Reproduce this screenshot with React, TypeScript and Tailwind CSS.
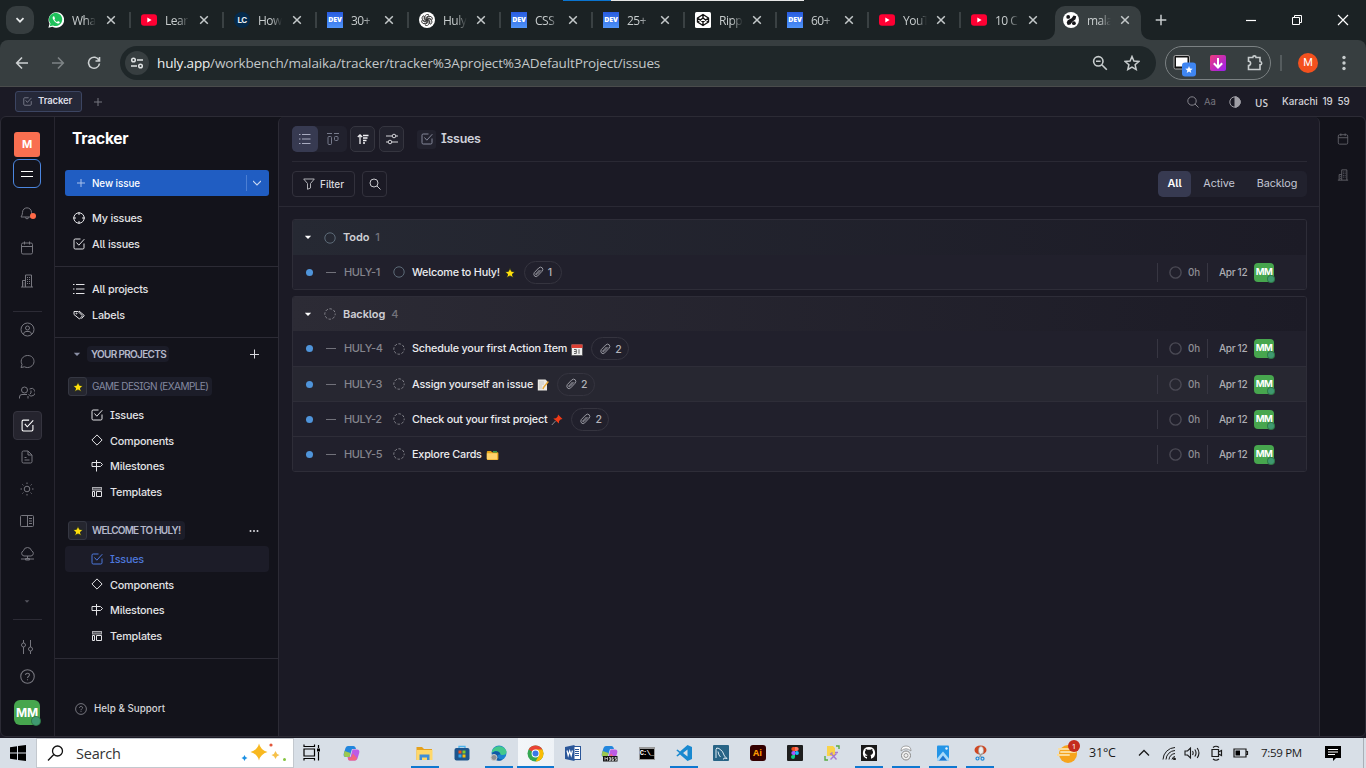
import React from "react";

type P = { children?: React.ReactNode; w?: number; h?: number; vb?: string; c?: string; sw?: number };

function Svg({ children, w = 16, h, vb, c = "", sw = 1 }: P) {
  const hh = h ?? w;
  return (
    <svg width={w} height={hh} viewBox={vb ?? `0 0 ${w} ${hh}`} fill="none" stroke="currentColor" strokeWidth={sw} className={`block shrink-0 ${c}`}>
      {children}
    </svg>
  );
}

/* ---------- favicons ---------- */
const WhatsApp = () => (
  <Svg w={16}>
    <path d="M0.4 15.8 1.5 11.7A7.8 7.8 0 1 1 4.4 14.7Z" fill="#fff" stroke="none" />
    <path d="M1.8 14.3 2.5 11.6A6.6 6.6 0 1 1 5 13.5Z" fill="#1fc15b" stroke="none" />
    <path d="M5.4 4.3c-.9.6-1 1.9-.2 3.3 1 1.900 2.500 3.200 4.300 3.800 1.200.3 2.200-.4 2.300-1.500L10 9l-.9 1C7.900 9.500 6.900 8.600 6.400 7.400L7 6.500 6.300 4.500Z" fill="#fff" stroke="none" />
  </Svg>
);
const YouTube = () => (
  <Svg w={16}>
    <rect x="0" y="2.300" width="16" height="11.400" rx="3" fill="#ff0033" stroke="none" />
    <path d="M6.300 5.500v5l4.300-2.500Z" fill="#fff" stroke="none" />
  </Svg>
);
const LC = () => (
  <span className="flex size-4 shrink-0 items-center justify-center rounded-full bg-[#042a4b] font-['Inter'] text-[8px] font-bold tracking-[-0.5px] text-[#e8eef4]">LC</span>
);
const Dev = () => (
  <span className="flex size-4 shrink-0 items-center justify-center bg-linear-to-b from-[#2a5be0] to-[#4f93f8] font-['Open_Sans'] text-[7px] font-extrabold tracking-[-0.1px] text-white">DEV</span>
);
const OpenAI = () => (
  <Svg w={16} sw={0.8}>
    <circle cx="8" cy="8" r="8" fill="#fff" stroke="none" />
    {[0, 60, 120, 180, 240, 300].map((a) => (
      <path key={a} transform={`rotate(${a} 8 8)`} d="M5.900 6.800V4.900A2.500 2.500 0 0 1 10.200 3.200M5.900 6.800 8 8M7.300 7.600V5.200L10 3.700" stroke="#222" />
    ))}
  </Svg>
);
const CodePen = () => (
  <Svg w={16} sw={1.400}>
    <rect width="16" height="16" rx="1.500" fill="#fff" stroke="none" />
    <path d="M8 2.500 13.500 6v4L8 13.500 2.500 10V6ZM8 2.500V6M8 10v3.500M2.500 6 8 10l5.500-4M2.500 10 8 6l5.500 4" stroke="#111" strokeLinejoin="round" />
  </Svg>
);
const Huly = () => (
  <Svg w={16}>
    <circle cx="8" cy="8" r="8" fill="#fff" stroke="none" />
    <g fill="#16161a" stroke="none">
      <circle cx="5.200" cy="4.900" r="1.900" />
      <path d="M8.600 6.300 10.600 3.400l2.600.9-.7 3L9.400 9.700 7.400 12.400l-2.700.5-1-2.300 1.100-2.400Z" />
      <circle cx="10.900" cy="11.200" r="1.900" />
    </g>
  </Svg>
);

const X = ({ c = "" }: { c?: string }) => (
  <Svg w={10} sw={1.500} c={c}>
    <path d="M1.200 1.200l7.600 7.600M8.800 1.200 1.200 8.800" />
  </Svg>
);

function TabBody({ icon, text, x = "ml-[9px]" }: { icon: React.ReactNode; text: string; x?: string }) {
  return (
    <>
      {icon}
      <span className="ml-2 w-[24px] shrink-0 pt-px font-['Open_Sans'] text-[12px] leading-4 tracking-[-0.5px] whitespace-nowrap text-[#c7cccd] [mask-image:linear-gradient(to_right,#000_55%,transparent)]">{text}</span>
      <X c={`${x} text-[#c4c9ca]`} />
    </>
  );
}

function TabStrip() {
  const tabs: [React.ReactNode, string][] = [
    [<WhatsApp />, "Wha"],
    [<YouTube />, "Lear"],
    [<LC />, "How"],
    [<Dev />, "30+"],
    [<OpenAI />, "Huly"],
    [<Dev />, "CSS"],
    [<Dev />, "25+"],
    [<CodePen />, "Ripp"],
    [<Dev />, "60+"],
    [<YouTube />, "YouT"],
    [<YouTube />, "10 C"],
  ];
  return (
    <div className="relative flex h-10 shrink-0 items-center bg-[#1b2224]">
      <div className="absolute top-0 left-[563px] flex h-px w-[241px]">
        <span className="w-12 bg-[#0a74d0]" />
        <span className="flex-1 bg-[#e6e6e6]" />
      </div>
      <button className="ml-1.5 flex size-7 items-center justify-center rounded-[10px] bg-[#363d3f] text-[#e6e9ea]">
        <Svg w={10} sw={1.700}><path d="M1.500 3.200 5 6.700l3.500-3.500" /></Svg>
      </button>
      <div className="ml-3.5 flex">
        {tabs.map(([icon, text], i) => (
          <div key={i} className={`flex shrink-0 items-center ${i < 3 ? "w-[93px]" : "w-[92px]"}`}>
            <TabBody icon={icon} text={text} x={i < 3 ? "ml-[10px]" : "ml-[9px]"} />
            {i < 10 && <span className="ml-[13px] h-4 w-0.5 shrink-0 bg-[#3a4143]" />}
          </div>
        ))}
      </div>
      <div className="relative -ml-2 mt-1.5 flex h-[34px] w-[86px] items-center rounded-t-[10px] bg-[#373e40] pb-1.5 pl-2">
        <Svg w={10} c="absolute bottom-0 -left-2.5 text-[#373e40]"><path d="M10 0v10H0A10 10 0 0 0 10 0Z" fill="currentColor" stroke="none" /></Svg>
        <Svg w={10} c="absolute -right-2.5 bottom-0 text-[#373e40]"><path d="M0 0v10h10A10 10 0 0 1 0 0Z" fill="currentColor" stroke="none" /></Svg>
        <TabBody icon={<Huly />} text="mala" />
      </div>
      <Svg w={12} c="ml-3.5 text-[#c7cccd]" sw={1.500}><path d="M6 .7v10.600M.7 6h10.600" /></Svg>
      <div className="ml-[79px] flex items-center text-white">
        <Svg w={10}><path d="M0 5.500h10" strokeWidth={1.200} /></Svg>
        <Svg w={12} c="ml-[35px]"><path d="M1.500 3.500h7v7h-7ZM3.500 3.500v-2h7v7h-2" /></Svg>
        <Svg w={12} c="ml-[34px]" sw={1.200}><path d="M1 1l10 10M11 1 1 11" /></Svg>
      </div>
    </div>
  );
}

function Toolbar() {
  return (
    <div className="shrink-0 bg-[#1b2224]">
      <div className="flex h-[46px] items-center rounded-t-lg bg-[#373e40]">
        <Svg w={14} c="ml-[15px] text-[#cdd1d2]" sw={1.600}><path d="M13 7H2M7 1.500 1.700 7 7 12.500" /></Svg>
        <Svg w={14} c="ml-[22px] text-[#7d8385]" sw={1.600}><path d="M1 7h11M7 1.500 12.300 7 7 12.500" /></Svg>
        <Svg w={14} c="ml-[22px] text-[#cdd1d2]" sw={1.600}><path d="M12 4.300A5.500 5.500 0 1 0 12.500 7.500M12.500 1v4h-4" /></Svg>
        <div className="ml-[19px] flex h-[34px] w-[1036px] items-center rounded-full bg-[#1f2729]">
          <span className="ml-[5px] flex size-6 items-center justify-center rounded-full bg-[#373e40] text-[#e0e3e4]">
            <Svg w={14} sw={1.500}><circle cx="3.500" cy="4" r="1.800" /><path d="M7 4h6M1 10h6" /><circle cx="10.500" cy="10" r="1.800" /></Svg>
          </span>
          <span className="ml-2 w-[943px] font-['Open_Sans'] text-[13.500px] leading-5 tracking-[-0.150px] whitespace-nowrap text-[#c3c8c9]"><span className="text-[#eef0f0]">huly.app</span>/workbench/malaika/tracker/tracker%3Aproject%3ADefaultProject/issues</span>
          <span className="-ml-[8px] flex items-center text-[#c7cccd]">
            <Svg w={16} sw={1.600}><circle cx="6.300" cy="6.300" r="4.700" /><path d="M9.800 9.800 14.800 14.800M4 6.300h4.600" /></Svg>
            <Svg w={16} c="ml-4" sw={1.500}><path d="M8 1.500l1.900 4.600 4.900.4-3.700 3.200 1.100 4.800L8 12l-4.200 2.500 1.100-4.800L1.200 6.500l4.900-.4Z" /></Svg>
          </span>
        </div>
        <div className="ml-[9px] flex h-[34px] w-[106px] items-center rounded-full border border-[#7b8183]">
          <span className="ml-[7px]">
            <Svg w={24} h={24} c="mt-1">
              <rect x="1" y="2.500" width="15.500" height="13.500" rx="1.500" fill="#111" stroke="#aaa" />
              <rect x="3" y="4.500" width="11.500" height="9" fill="#fff" stroke="none" />
              <rect x="9" y="9.500" width="14" height="14" rx="3" fill="#3f86f2" stroke="none" />
              <path d="M16 13l1 2.500 2.700.2-2.100 1.700.7 2.600-2.300-1.400-2.300 1.400.7-2.600-2.100-1.700 2.700-.2Z" fill="#fff" stroke="none" />
            </Svg>
          </span>
          <Svg w={16} c="ml-[13px]">
            <defs><linearGradient id="dl" x1="0" y1="0" x2="1" y2="1"><stop offset="0" stopColor="#ef3b7d" /><stop offset="1" stopColor="#9a1ff2" /></linearGradient></defs>
            <rect width="16" height="16" rx="2" fill="url(#dl)" stroke="none" />
            <path d="M8 3v9.500M3.800 8.300 8 12.500l4.200-4.200" stroke="#fff" strokeWidth={2} />
          </Svg>
          <Svg w={18} c="ml-[20px] text-[#c7cccd]" sw={1.600}><path d="M2.500 3.500h4.300a1.600 1.600 0 0 1 3.200 0h4v4a1.700 1.700 0 0 1 0 3.400v4.600H2.500v-4a2 2 0 0 0 0-4.200Z" /></Svg>
        </div>
        <span className="ml-[9px] h-4 w-0.5 bg-[#555c5e]" />
        <span className="ml-4 flex size-5 items-center justify-center rounded-full bg-[#f4511e] font-['Roboto'] text-[11px] text-white">M</span>
        <Svg w={4} h={16} c="ml-6 text-[#c7cccd]"><g fill="currentColor" stroke="none"><circle cx="2" cy="2.500" r="1.700" /><circle cx="2" cy="8" r="1.700" /><circle cx="2" cy="13.500" r="1.700" /></g></Svg>
      </div>
      <div className="h-px bg-[#4a4c4c]" />
    </div>
  );
}

/* ---------- app icons ---------- */
const Check = ({ s = 12, c = "" }: { s?: number; c?: string }) => (
  <Svg w={s} vb="0 0 12 12" c={c}><path d="M7.500 1H2.200Q1 1 1 2.200v7.600Q1 11 2.200 11h7.600Q11 11 11 9.800V5.500M3.500 4.500l2.300 2.700L11.300 1.200" /></Svg>
);
const Diamond = () => <Svg w={12} c="-mt-0.5"><path d="M6 .9 11.100 6 6 11.100.9 6Z" strokeLinejoin="round" /></Svg>;
const Milestone = () => <Svg w={12}><path d="M5.500 0v11.500M1 2.500h8.500L11.500 4.500 9.500 6.500H1Z" /></Svg>;
const Template = () => <Svg w={12} c="-mt-px"><rect x="1.500" y="1.500" width="9" height="2.500" fill="#55555c" stroke="#a9a9ae" /><path d="M1.500 5.500v5h2v-5ZM5.500 10.500v-5h5v5Z" /></Svg>;
const Calendar = ({ s = 14 }: { s?: number }) => <Svg w={s} vb="0 0 14 14"><rect x="1.500" y="2" width="11" height="11" rx="1.500" /><path d="M1.500 5.500h11M4.500.5v3M9.500.5v3" /></Svg>;
const Building = ({ s = 14 }: { s?: number }) => <Svg w={s} vb="0 0 14 14"><path d="M1 13h12M5.500 13V1h6v12M2.500 13V6.500h3" /><path d="M7.500 3v8M9.500 3v8M4 8.500v3" strokeDasharray="1 1" /></Svg>;
const Help = ({ s = 14 }: { s?: number }) => <Svg w={s} vb="0 0 14 14"><circle cx="7" cy="7" r="6.300" /><path d="M5.200 5.700C5.200 3.200 9 3.500 8.800 5.600 8.700 6.800 7 7 7 8.500M7 9.500v1" /></Svg>;
const Caret = ({ c = "" }: { c?: string }) => <Svg w={8} h={5} c={c}><path d="M.8.800h6.400L4 4Z" fill="currentColor" stroke="none" /></Svg>;
const Clip = () => <Svg w={12}><path d="M3.500 8.300 7.500 4M2.200 6.700 6.700 2Q8.500.3 10.200 1.800 11.600 3.500 10 5.300L5.700 9.900Q4.300 11.300 2.700 10.200 1.200 8.800 2.200 6.700M3.500 8.300Q4.200 9.300 5.200 8.300L9 4.300" /></Svg>;
const List = () => <Svg w={12}><path d="M3 1.500h8.500M3 6h8.500M3 10.500h8.500M0 1.500h1.500M0 6h1.500M0 10.500h1.500" /></Svg>;

function Star() {
  return <Svg w={12}><path d="M6 .8l1.500 3.500 3.800.3-2.900 2.500.9 3.700L6 8.900l-3.300 1.900.9-3.700L.700 4.600l3.800-.3Z" fill="#ffdf0b" stroke="#1d2526" strokeWidth={0.900} /></Svg>;
}

function Avatar({ big = false }: { big?: boolean }) {
  return (
    <span className={`relative flex shrink-0 items-center justify-center bg-[#47a64e] font-['Inter'] font-bold text-white ${big ? "h-[25px] w-[26px] rounded-md text-[12px] tracking-[-0.300px]" : "h-[19px] w-5 rounded text-[9.500px] tracking-[-0.500px]"}`}>
      MM
      <i className={`absolute right-0 bottom-0 rounded-full bg-[#3f9970] ring-1 ring-[#2f7b48] ${big ? "size-[8px]" : "size-[6px]"}`} />
    </span>
  );
}

function RailItem({ children, c = "" }: { children: React.ReactNode; c?: string }) {
  return <div className={`flex h-8 shrink-0 items-center justify-center ${c}`}>{children}</div>;
}

function Rail() {
  return (
    <div className="flex w-[54px] shrink-0 flex-col items-stretch border-r border-[#272630] pr-px text-[#77777f]">
      <div className="mx-[13px] mt-[15px] flex h-[25px] shrink-0 items-center justify-center rounded-[3px] bg-[#f96f50] font-['Inter'] text-[11px] font-bold text-white">M</div>
      <div className="mx-[12px] mt-[2px] flex h-[29px] shrink-0 items-center justify-center rounded-md border-[1.500px] border-[#4b86e0] text-white"><Svg w={12} h={12}><path d="M0 3.500h12M0 8.500h12" /></Svg></div>
      <RailItem c="mt-[9px]">
        <span className="relative">
          <Svg w={14}><path d="M1 11Q2.500 9 2.500 6.500C2.500.3 11.500.3 11.500 6.500Q11.500 9 13 11ZM5 11.500Q7 14.500 9 11.500" /></Svg>
          <i className="absolute -right-[2px] bottom-[1px] size-1.5 rounded-full bg-[#ff6a48]" />
        </span>
      </RailItem>
      <RailItem c="mt-[3px]"><Calendar /></RailItem>
      <RailItem c="mt-px"><Building /></RailItem>
      <div className="mr-[11px] ml-3 mt-[14px] h-px shrink-0 bg-[#2c2b35]" />
      <RailItem c="mt-px"><Svg w={15}><circle cx="7.500" cy="7.500" r="6.500" /><circle cx="7.500" cy="6" r="2" /><path d="M3.500 12Q4 9.500 6 9.500h3Q11 9.500 11.500 12" /></Svg></RailItem>
      <RailItem><Svg w={15}><path d="M1 13.500 2 10.500C-.5 6 3 1.500 7.700 1.500 12 1.500 14 4.500 14 7.500 14 12 8.500 15 4.500 12.800Z" /></Svg></RailItem>
      <RailItem><Svg w={16}><circle cx="5.500" cy="5" r="3" /><path d="M.5 13.500V12Q.5 9.500 3 9.500h5M9 13.500V11M10.500 4A3.800 3.800 0 1 1 9.500 9.500M12 5.500V8l-1 1" /></Svg></RailItem>
      <RailItem>
        <span className="ml-px flex size-[29px] items-center justify-center rounded border border-[#35343f] bg-[#25242e] text-white"><Check s={13} /></span>
      </RailItem>
      <RailItem><Svg w={12} h={14}><path d="M2.500 1H7l4 4v6.500Q11 13 9.500 13h-7Q1 13 1 11.500V2.500Q1 1 2.500 1ZM7 1v4h4M3.500 7.500h2M3.500 10h5" /></Svg></RailItem>
      <RailItem><Svg w={14}><circle cx="7" cy="7" r="2.800" /><path d="M7 .5v1.500M7 12v1.500M.5 7H2M12 7h1.500M2.400 2.400l1 1M10.600 10.600l1 1M2.400 11.600l1-1M10.600 3.400l1-1" /></Svg></RailItem>
      <RailItem><Svg w={14}><rect x=".5" y="1.500" width="13" height="11" rx="1" /><path d="M7.500 1.500v11M9 4.500h3M9 7h3M9 9.500h3" /></Svg></RailItem>
      <RailItem><Svg w={15}><path d="M4 10A2.700 2.700 0 0 1 3.400 4.800 4.200 4.200 0 0 1 11.600 4.800 2.700 2.700 0 0 1 11 10ZM7.500 10V12M1 13h13M5.500 12.500h4v1.500h-4Z" /></Svg></RailItem>
      <RailItem c="mt-4"><Caret c="scale-75 text-[#55555e]" /></RailItem>
      <div className="mr-[11px] ml-3 mt-[2px] h-px shrink-0 bg-[#2c2b35]" />
      <RailItem c="mt-[11px]"><Svg w={12} h={14}><path d="M2.500 0v3M2.500 7v7M9.500 0v7M9.500 11v3" /><circle cx="2.500" cy="5" r="2" /><circle cx="9.500" cy="9" r="2" /></Svg></RailItem>
      <RailItem c="!h-[26px]"><Help s={15} /></RailItem>
      <div className="mt-[11px] flex justify-center"><Avatar big /></div>
    </div>
  );
}

function NavRow({ icon, text, c = "", pad = "pl-2", active = false }: { icon: React.ReactNode; text: string; c?: string; pad?: string; active?: boolean }) {
  return (
    <div className={`mr-[9px] ml-[10px] flex h-[26px] shrink-0 items-center rounded ${pad} ${active ? "bg-[#1c1c28] text-[#4d78dc]" : "text-[#e3e3e6]"} ${c}`}>
      {icon}
      <span className="ml-[7px] pt-0.5 text-[10.800px] font-medium tracking-[-0.200px]">{text}</span>
    </div>
  );
}

function ProjectHead({ text, dim = false, dots = false, c = "" }: { text: string; dim?: boolean; dots?: boolean; c?: string }) {
  return (
    <div className={`mx-[13px] flex h-[19px] shrink-0 items-center ${c}`}>
      <span className="flex h-[19px] items-center rounded bg-[#1c1d29]">
        <span className="flex size-[19px] items-center justify-center rounded-[3px] border border-[#353742] bg-[#25262f]"><Star /></span>
        <span className={`ml-[5px] text-[10px] whitespace-nowrap ${dim ? "pr-1 tracking-[-0.550px] text-[#858aa0]" : "pr-[5px] font-semibold tracking-[-0.800px] text-[#b4b8ca]"}`}>{text}</span>
      </span>
      {dots && <Svg w={10} h={4} c="mr-[6px] ml-auto text-[#d8d8de]"><g fill="currentColor" stroke="none"><circle cx="1.500" cy="2" r="1" /><circle cx="5" cy="2" r="1" /><circle cx="8.500" cy="2" r="1" /></g></Svg>}
    </div>
  );
}

function Nav() {
  const sub = "pl-[26px]";
  return (
    <div className="flex w-[223px] shrink-0 flex-col">
      <h1 className="mt-[11px] ml-[17px] text-[15.500px] leading-[22px] font-bold tracking-[-0.200px] text-white">Tracker</h1>
      <div className="mr-[9px] ml-[10px] mt-5 flex h-[26px] shrink-0 items-center rounded-[3px] bg-[#205dc2] text-white">
        <Svg w={8} c="ml-3 text-[#a9c2ec]"><path d="M4 0v8M0 4h8" /></Svg>
        <span className="ml-[7px] pt-0.5 text-[9.800px] font-medium tracking-[-0.050px]">New issue</span>
        <span className="ml-auto h-4 w-px bg-[#4c7fd4]" />
        <Svg w={8} c="mr-2 ml-[6px] text-[#c9d8f2]" sw={1.100}><path d="M0 2l4 4 4-4" /></Svg>
      </div>
      <NavRow c="mt-[9px]" icon={<Svg w={12}><circle cx="6" cy="6" r="5.200" /><path d="M6 0v3M6 9v3M0 6h3M9 6h3" /></Svg>} text="My issues" />
      <NavRow icon={<Check />} text="All issues" />
      <div className="mt-[9px] h-px shrink-0 bg-[#2c2b35]" />
      <NavRow c="mt-[9px]" icon={<List />} text="All projects" />
      <NavRow icon={<Svg w={12}><path d="M1 2.500h4l4.500 4.300L6.500 10 1 5.500ZM6 2l5.300 4.500L8.500 9.700" /><circle cx="3.500" cy="4.500" r=".5" /></Svg>} text="Labels" />
      <div className="mt-[9px] h-px shrink-0 bg-[#2c2b35]" />
      <div className="mt-2 flex h-4 shrink-0 items-center">
        <Caret c="mt-px ml-[18px] text-[#8a8fa5]" />
        <span className="ml-[6px] rounded bg-[#1b1c28] pr-[3px] pl-1 text-[10px] leading-4 font-semibold tracking-[-0.680px] text-[#b4b8ca]">YOUR PROJECTS</span>
        <Svg w={10} c="mr-[19px] ml-auto text-[#d8d8de]"><path d="M5.500 .5v9M1 5.500h9" /></Svg>
      </div>
      <ProjectHead c="mt-[15px]" text="GAME DESIGN (EXAMPLE)" dim />
      <NavRow c="mt-[6px]" pad={sub} icon={<Check />} text="Issues" />
      <NavRow pad={sub} icon={<Diamond />} text="Components" />
      <NavRow c="-mt-px" pad={sub} icon={<Milestone />} text="Milestones" />
      <NavRow pad={sub} icon={<Template />} text="Templates" />
      <ProjectHead c="mt-[16px]" text="WELCOME TO HULY!" dots />
      <NavRow c="mt-[6px]" pad={sub} icon={<Check />} text="Issues" active />
      <NavRow pad={sub} icon={<Diamond />} text="Components" />
      <NavRow c="-mt-px" pad={sub} icon={<Milestone />} text="Milestones" />
      <NavRow pad={sub} icon={<Template />} text="Templates" />
      <div className="mt-[9px] h-px shrink-0 bg-[#2c2b35]" />
      <div className="mt-[42px] ml-5 flex h-4 shrink-0 items-center text-[#85858d]">
        <Help s={12} />
        <span className="ml-[7px] pt-px text-[9.800px] font-medium text-[#d3d3d8]">Help &amp; Support</span>
      </div>
    </div>
  );
}

function StatusCircle({ dashed = false, c = "" }: { dashed?: boolean; c?: string }) {
  return <Svg w={12} c={c}><circle cx="6" cy="6" r="5.200" strokeDasharray={dashed ? "2.600 1.480" : undefined} strokeDashoffset={1.300} /></Svg>;
}

const IconDate = () => (
  <Svg w={12}><rect x=".5" y=".5" width="11" height="11" fill="#eee" stroke="#333" strokeWidth={0.500} /><path d="M.5.500h11v3.500H.5Z" fill="#dc3f34" stroke="none" /><path d="M3 5.500h2.300v4H3M3 7.500h2.300M8 5.300v4.500" stroke="#555" strokeWidth={0.900} /></Svg>
);
const IconMemo = () => (
  <Svg w={12}><path d="M.8.500h7.700L10 2v9.500H.8Z" fill="#eceae4" stroke="none" /><path d="M2 3h5M2 5h5M2 7h3M2 9h3" stroke="#b8b8b4" strokeWidth={0.700} /><path d="M11.300 2.500 6.500 8.500l-.5 1.500" stroke="#e8a93a" strokeWidth={1.500} /></Svg>
);
const IconPin = () => (
  <Svg w={12}><path d="M7 .5 11.500 5 9.500 5.500 8 7.200 8 9.500 2.300 4.500 5 4.200 6.700 2.500Z" fill="#f03a17" stroke="none" /><path d="M4.500 7 .8 11" stroke="#aaa" strokeWidth={0.800} /></Svg>
);
const IconCards = () => (
  <Svg w={13} h={12}><path d="M.8 3Q.8 2 1.800 2H5l1 1.200h5.500q.9 0 .9 1V10q0 1-1 1H1.800q-1 0-1-1Z" fill="#e8a516" stroke="none" /><path d="M7 2h4v1.500H7Z" fill="#3a9b4c" stroke="none" /><path d="M.8 4.200h10.400V10.500H1.800q-1 0-1-1Z" fill="#ffd36b" stroke="none" /></Svg>
);

type Row = { id: string; title: string; icon: React.ReactNode; n?: string; hover?: boolean; dashed?: boolean; h: string };

function IssueRow({ r, last }: { r: Row; last: boolean }) {
  return (
    <div className={`flex shrink-0 items-center ${r.h} ${last ? "" : "border-b border-[#2e2d38]"} ${r.hover ? "bg-[#272731]" : "bg-[#21202c]"}`}>
      <i className="ml-[13px] size-[7px] rounded-full bg-[#4f94da]" />
      <i className="ml-[13px] h-px w-[10px] bg-[#71717a]" />
      <span className="ml-[8px] w-[49px] text-[11px] font-medium tracking-[-0.450px] text-[#85858d]">{r.id}</span>
      <StatusCircle dashed={r.dashed} c={r.dashed ? "text-[#83838a]" : "text-[#5d6b78]"} />
      <span className="ml-[7px] pt-0.5 text-[10.800px] font-medium tracking-[-0.200px] whitespace-nowrap text-[#ececef]">{r.title}</span>
      <span className="ml-1 pt-0.5">{r.icon}</span>
      {r.n && (
        <span className="ml-[8px] flex h-[23px] w-[38px] shrink-0 items-center rounded-full border border-[#35343f] pl-[7px] text-[#9a9aa2]">
          <Clip />
          <span className="ml-[4px] pt-0.5 text-[10.500px] font-medium text-[#b4b4ba]">{r.n}</span>
        </span>
      )}
      <span className="ml-auto h-[19px] w-px bg-[#373642]" />
      <Svg w={13} c="ml-[11px] text-[#4a4954]" sw={1.400}><circle cx="6.500" cy="6.500" r="5.600" /></Svg>
      <span className="ml-[6px] w-[19px] pt-0.5 text-[9.800px] font-medium text-[#8d8d94]">0h</span>
      <span className="h-[19px] w-px bg-[#373642]" />
      <span className="ml-[11px] w-[35px] text-[10px] font-medium tracking-[-0.300px] whitespace-nowrap text-[#aeaeb4]">Apr 12</span>
      <span className="mr-[32px]"><Avatar /></span>
    </div>
  );
}

function Group({ name, count, rows, c, head, dashed }: { name: string; count: string; rows: Row[]; c: string; head: string; dashed?: boolean }) {
  return (
    <section className={`mr-3 ml-[13px] shrink-0 overflow-hidden rounded-[3px] border border-[#2e2d38] ${c}`}>
      <header className={`flex items-center ${head}`}>
        <Caret c="ml-[11px] text-white" />
        <StatusCircle dashed={dashed} c={`ml-[12px] ${dashed ? "text-[#83838a]" : "text-[#5d6b78]"}`} />
        <span className="ml-[7px] text-[11px] font-semibold tracking-[-0.100px] text-[#cfcfd4]">{name}</span>
        <span className="ml-[6px] text-[11px] font-medium text-[#74747c]">{count}</span>
      </header>
      {rows.map((r, i) => <IssueRow key={r.id} r={r} last={i === rows.length - 1} />)}
    </section>
  );
}

function Main() {
  return (
    <main className="flex min-w-0 flex-1 flex-col rounded-t-md border-x border-[#2c2b35] bg-[#1b1a25]">
      <div className="mr-3 ml-[13px] flex h-[45px] shrink-0 items-center border-b border-[#2a2934]">
        <div className="flex rounded-[5px] bg-[#21212d]">
          <span className="flex size-[26px] items-center justify-center rounded-[5px] bg-[#373a51] text-[#a8abc0]"><List /></span>
          <span className="flex h-[26px] w-[29px] items-center justify-center text-[#777b8c]"><Svg w={12}><path d="M0 .5h5M7 .5h5" /><rect x="1" y="3.500" width="3.500" height="8" rx="1" /><rect x="7.500" y="3.500" width="3.500" height="4" rx="1" /></Svg></span>
        </div>
        <span className="ml-[3px] flex h-[26px] w-[25px] items-center justify-center rounded-[5px] border border-[#35353f] bg-[#22222d] text-[#f0f0f3]"><Svg w={12} sw={1.300}><path d="M3 11V2M.8 4 3 1.800 5.200 4M6 2.500h5.500M6 5h4.500M6 7.500h3.500M6 10h2" /></Svg></span>
        <span className="ml-[4px] flex h-[26px] w-[25px] items-center justify-center rounded-[5px] border border-[#35353f] bg-[#22222d] text-[#d5d5da]"><Svg w={12}><path d="M0 3h6M10 3h2M0 9h2M6 9h6" /><circle cx="8" cy="3" r="1.800" /><circle cx="4" cy="9" r="1.800" /></Svg></span>
        <span className="ml-[13px] flex size-[19px] items-center justify-center rounded-[3px] bg-[#22222e] text-[#85889a]"><Check /></span>
        <h2 className="ml-[5px] text-[12.500px] font-semibold tracking-[-0.300px] text-[#d0d1da]">Issues</h2>
      </div>
      <div className="flex h-[45px] shrink-0 items-center border-b border-[#2a2934] pr-3 pl-[13px]">
        <button className="flex h-[26px] w-[63px] items-center rounded border border-[#32313c] pl-[10px] text-[#b0b0b6]">
          <Svg w={12}><path d="M.7 1h10.600L7.500 5.500V10l-3 1.300V5.500Z" /></Svg>
          <span className="ml-[5px] text-[10px] font-medium text-[#d9d9dd]">Filter</span>
        </button>
        <button className="ml-[7px] flex h-[26px] w-[25px] items-center justify-center rounded border border-[#32313c] text-[#c9c9ce]"><Svg w={12}><circle cx="5" cy="5" r="4" /><path d="M8 8l3.500 3.500" /></Svg></button>
        <div className="ml-auto flex h-[26px] w-[149px] items-center rounded-[5px] bg-[#21212d] text-[10.800px] tracking-[-0.080px] text-[#c3c6d4]">
          <span className="flex h-[26px] w-[33px] items-center justify-center rounded-[5px] bg-[#373a51] font-semibold text-white">All</span>
          <span className="w-[56px] text-center">Active</span>
          <span className="w-[60px] text-center">Backlog</span>
        </div>
      </div>
      <Group name="Todo" count="1" c="mt-[12px]" head="h-[35px] bg-linear-to-r from-[#262933] to-[#1c1b26]"
        rows={[{ id: "HULY-1", title: "Welcome to Huly!", icon: <Star />, n: "1", h: "h-[34px]" }]} />
      <Group name="Backlog" count="4" dashed c="mt-[6px]" head="h-[34px] bg-linear-to-r from-[#2c2b35] to-[#1c1b26]"
        rows={[
          { id: "HULY-4", title: "Schedule your first Action Item", icon: <IconDate />, n: "2", dashed: true, h: "h-[36px]" },
          { id: "HULY-3", title: "Assign yourself an issue", icon: <IconMemo />, n: "2", dashed: true, hover: true, h: "h-[35px]" },
          { id: "HULY-2", title: "Check out your first project", icon: <IconPin />, n: "2", dashed: true, h: "h-[35px]" },
          { id: "HULY-5", title: "Explore Cards", icon: <IconCards />, dashed: true, h: "h-[34px]" },
        ]} />
    </main>
  );
}

function AppTop() {
  return (
    <div className="flex h-[29px] shrink-0 items-center">
      <div className="ml-[15px] flex h-[21px] w-[67px] items-center rounded-[3px] border border-[#3c4562] bg-[#252838] pl-[7px]">
        <Check s={9} c="text-[#8c8f9d]" />
        <span className="ml-[6px] text-[9.500px] font-semibold tracking-[-0.100px] text-[#dcdde4]">Tracker</span>
      </div>
      <Svg w={8} c="ml-3 text-[#777680]"><path d="M4 0v8M0 4h8" /></Svg>
      <Svg w={12} c="ml-auto text-[#85848c]"><circle cx="5" cy="5" r="4.200" /><path d="M8 8l3.500 3.500" /></Svg>
      <span className="ml-[5px] w-[25px] pt-px text-[9.500px] text-[#77767f]">Aa</span>
      <Svg w={12} c="text-[#a09fa6]"><circle cx="6" cy="6" r="5.200" /><path d="M6 .8a5.200 5.200 0 0 1 0 10.400Z" fill="currentColor" /></Svg>
      <span className="mt-[3px] ml-[14px] w-[27px] font-['Open_Sans'] text-[10px] font-semibold text-[#d0d0d5]">US</span>
      <span className="w-[84px] pt-0.5 text-[9.800px] font-medium tracking-[0.030px] whitespace-nowrap text-[#d4d3d9] [word-spacing:2px]">Karachi 19 59</span>
    </div>
  );
}

/* ---------- taskbar ---------- */
const Edge = () => <Svg w={17}><circle cx="9" cy="8" r="7.500" fill="#1b83cf" stroke="none" /><path d="M2 6C4-.5 14-.5 16.500 6 17 9 14 11 10.500 9.500 10 6 5 5 2 8Z" fill="#43c98c" stroke="none" /><path d="M2 8C5 5 10 6 10.500 9.500Q7 9 7.500 12Q9 15 13 14.500 9 17 5 14.500Z" fill="#0f5aa5" stroke="none" /><circle cx="4" cy="12.500" r="3" fill="#8d8f94" stroke="#ccc" /></Svg>;
const Chrome = () => <Svg w={17}><circle cx="8.500" cy="8.500" r="8" fill="#34a853" stroke="none" /><path d="M8.500 8.500 1.600 4.500A8 8 0 0 1 15.400 4.500Z" fill="#ea4335" stroke="none" /><path d="M8.500 4.500h6.900A8 8 0 0 1 8.500 16.500L12 10.500Z" fill="#fbbc04" stroke="none" /><circle cx="8.500" cy="8.500" r="3.900" fill="#fff" stroke="none" /><circle cx="8.500" cy="8.500" r="3" fill="#3b78e7" stroke="none" /></Svg>;
const Copilot = ({ label = false }: { label?: boolean }) => (
  <Svg w={17}>
    <g stroke="none">
      <path d="M5 1h5.500Q12 1 12.500 2.500L13 4H9L6.500 12H3Q0 12 .8 8.500L2.500 3Q3.300 1 5 1Z" fill="#2286dd" />
      <path d="M1.500 6 1 9Q.5 12 3 12h3.500L7.500 8Z" fill="#9dc84f" />
      <path d="M9.500 4.500H14q3 0 2.200 3.500L14.500 13.500Q13.700 15.500 12 15.500H7Q5.500 15.500 5 14L4.500 12H7.500Z" fill="#bd5be5" />
      <path d="M5 12.500h3L10 8.500l4 4.500Q13.500 15.500 12 15.500H7Q5.500 15.500 5 14Z" fill="#f2647e" />
      {label && <rect x="2" y="11" width="14.500" height="5.500" fill="#151515" />}
    </g>
    {label && <path d="M4 15.500v-3l1.300 1.500 1.200-1.500v3M8 12.500h1.500v3H8M8 14h1.500M12.500 12.500H11v3h1.500v-1.500H11M15.500 12.500H14v1.300h1.500v1.500H14" stroke="#eee" strokeWidth={0.700} />}
  </Svg>
);

function Taskbar() {
  const apps: [React.ReactNode, string][] = [
    [<Svg w={17}><path d="M.5 2h5.500l2 2h8v11H.5Z" fill="#e5a11c" stroke="none" /><path d="M.5 5h16V15H.5Z" fill="#ffd869" stroke="none" /><path d="M3.500 9.500h10V15h-2.500v-2.500H6V15H3.500Z" fill="#3f8ed8" stroke="none" /></Svg>, "u"],
    [<Svg w={16}><path d="M5 4V1.500h6V4" stroke="#4ab3ee" strokeWidth={1.300} /><rect x=".5" y="3" width="15" height="12.500" rx="2" fill="#1d548c" stroke="none" /><path d="M4.500 5.500h3v3h-3Z" fill="#f1511b" stroke="none" /><path d="M8.500 5.500h3v3h-3Z" fill="#80cc28" stroke="none" /><path d="M4.500 9.500h3v3h-3Z" fill="#35a7ee" stroke="none" /><path d="M8.500 9.500h3v3h-3Z" fill="#fbbc09" stroke="none" /></Svg>, ""],
    [<Edge />, "u"],
    [<Chrome />, "a"],
    [<Svg w={16}><rect x="8" y="1.500" width="7.500" height="13" fill="#fff" stroke="#2a5699" /><path d="M10 4.500h4M10 6.500h4M10 8.500h4M10 10.500h4" stroke="#2a5699" /><path d="M0 2 9.500 0v16L0 14Z" fill="#2a5699" stroke="none" /><path d="M2 5.500 3.200 10.500 4.700 6 6.200 10.500 7.400 5.500" stroke="#fff" strokeWidth={1.200} /></Svg>, ""],
    [<Copilot label />, ""],
    [<span className="flex h-[13px] w-4 items-center justify-center border border-t-2 border-[#999] bg-black font-['Liberation_Mono'] text-[7px] font-bold tracking-[-0.800px] text-white">C:\_</span>, ""],
    [<Svg w={16}><path d="M11.500 0 16 2v12l-4.500 2L4 9.500 1.500 11.500.3 10.800 3.300 8 .3 5.200 1.500 4.500 4 6.500ZM11.500 4.500 7 8l4.500 3.500Z" fill="#1989d0" fillRule="evenodd" stroke="none" /></Svg>, "u"],
    [<Svg w={16}><rect width="16" height="16" rx="1" fill="#286486" stroke="none" /><path d="M3 13V4.500Q3 2 6 3.500 10 5.500 11.500 11L14 13.500 11 13 10.500 14.500M5 6.500 6 10l1.500 2" stroke="#dbe9f2" /></Svg>, ""],
    [<span className="flex size-4 items-center justify-center rounded-[3px] bg-[#330000] font-['Open_Sans'] text-[9px] font-bold text-[#ff9a00]">Ai</span>, ""],
    [<Svg w={16}><rect width="16" height="16" rx="1" fill="#1e1e1e" stroke="none" /><g stroke="none"><path d="M8 2H6.300a2 2 0 0 0 0 4H8Z" fill="#f24e1e" /><path d="M8 2h1.700a2 2 0 0 1 0 4H8Z" fill="#ff7262" /><path d="M8 6H6.300a2 2 0 0 0 0 4H8Z" fill="#a259ff" /><circle cx="9.900" cy="8" r="2" fill="#1abcfe" /><path d="M8 10H6.300A2 2 0 1 0 8 12Z" fill="#0acf83" /></g></Svg>, ""],
    [<Svg w={16}><path d="M3 1h6l2 2v8H3Z" fill="#f9d34b" stroke="none" /><path d="M1 11v4h3M12 1h3v3" stroke="#58ab43" strokeWidth={1.400} /><path d="M6.500 14.500l6-6M7.500 9l5 5.500" stroke="#a678d0" strokeWidth={1.400} /><path d="M11 7.500h3M6 9.500 8.500 7.500" stroke="#a678d0" strokeWidth={1.400} /></Svg>, ""],
    [<Svg w={16}><rect width="16" height="16" fill="#191919" stroke="none" /><path d="M8 2a6 6 0 0 0-2 11.700V12q-1.800.2-2-1.500 1.300.5 2 .3.200-.6.700-.8C3.500 9.500 3.500 6.500 4.700 5.500V3.800L6.500 4.700h3L11.300 3.800V5.500C12.500 6.500 12.500 9.500 9.300 10q.700.4.700 1.400v2.300A6 6 0 0 0 8 2Z" fill="#fff" stroke="none" /></Svg>, "u"],
    [<Svg w={16}><circle cx="8" cy="10.500" r="4.500" fill="#f2f2f2" stroke="#888" /><path d="M3 6Q3 1 8 1t5 5Q8 1.500 3 6Z" fill="#fff" stroke="#8d8d8d" strokeWidth={0.800} /><circle cx="8" cy="10.500" r="2" stroke="#999" /></Svg>, "u"],
    [<Svg w={16}><rect x="2" y=".5" width="12" height="15" rx="1" fill="#2495e7" stroke="none" /><path d="M2 13.500 8 6.500l6 7v2H2Z" fill="#a9dafa" stroke="none" /><path d="M4 15.500 8 10.500l4 5Z" fill="#1f76cf" stroke="none" /><circle cx="11.500" cy="3.500" r="1.200" fill="#e6f5ff" stroke="none" /></Svg>, "u"],
    [<Svg w={16}><ellipse cx="8.500" cy="5" rx="6" ry="4.500" fill="#cf4722" stroke="none" /><ellipse cx="9" cy="5.500" rx="2.500" ry="4" fill="#eee" stroke="#999" strokeWidth={0.600} /><path d="M7 8 9.500 12.500M10.500 8 7 12.500" stroke="#999" strokeWidth={1.100} /><circle cx="5.500" cy="13.500" r="1.500" stroke="#1d86d6" strokeWidth={1.200} /><circle cx="10.500" cy="13.700" r="1.500" stroke="#1d86d6" strokeWidth={1.200} /></Svg>, "u"],
  ];
  return (
    <div className="flex h-[30px] shrink-0 items-center bg-[#d8dfe7] font-['Open_Sans'] text-[#1a1a1a]">
      <Svg w={16} c="ml-[10px]"><path d="M0 2.300 7 1.300V7.500H0ZM8 1.100 16 0v7.500H8ZM0 8.500h7v6.200L0 13.700ZM8 8.500h8V16L8 14.900Z" fill="#000" stroke="none" /></Svg>
      <div className="ml-[10px] flex h-[30px] w-[258px] items-center border border-[#c3c8ce] bg-white">
        <Svg w={17} c="ml-[10px] text-[#111]" sw={1.300}><circle cx="10.500" cy="6" r="5" /><path d="M6.800 9.500 1 15.500" /></Svg>
        <span className="ml-[12px] pt-px text-[14.500px] leading-5 tracking-[-0.200px] text-[#333]">Search</span>
        <Svg w={46} h={24} c="mr-[6px] ml-auto">
          <g stroke="none">
            <path d="M18 2.500q1.500 6.500 8.500 8.500-7 2-8.500 8.500-1.500-6.500-8.500-8.500Q16.500 9 18 2.500Z" fill="#f8b81f" />
            <path d="M34.500 10q.7 3 4 4-3.300 1-4 4-.7-3-4-4 3.300-1 4-4Z" fill="#f6c14b" />
            <path d="M3.500 14q.5 2.500 3 3-2.500.6-3 3-.6-2.500-3-3 2.400-.5 3-3Z" fill="#1a8fe3" />
            <circle cx="30" cy="4" r="1.600" fill="#e2573b" /><circle cx="43.500" cy="18.500" r="1.500" fill="#86c440" />
          </g>
        </Svg>
      </div>
      <Svg w={18} c="ml-[9px] text-black" sw={1.200}><path d="M1 5h10.500v7H1ZM1 .5v2h10.500v-2M1 16.500v-2h10.500v2M15.500 1v3M15.500 8v8.500" /><rect x="14" y="4.500" width="3" height="3" fill="#000" stroke="none" /></Svg>
      <span className="ml-[22px]"><Copilot /></span>
      <div className="ml-[46px] flex">
        {apps.map(([icon, kind], i) => (
          <div key={i} className={`relative flex h-[30px] w-[37px] items-center justify-center ${kind === "a" ? "bg-linear-to-r from-[#d8dfe7] from-[1px] via-[#f3f6f9] via-[1px] to-[#eef2f6]" : ""}`}>
            {icon}
            {kind !== "" && <i className={`absolute bottom-0 h-0.5 bg-[#0f78d0] ${kind === "a" ? "right-0 left-0" : "right-[4px] left-[5px]"}`} />}
          </div>
        ))}
      </div>
      <span className="relative ml-[59px]">
        <Svg w={22}><circle cx="11" cy="12" r="9" fill="#f6a41c" stroke="none" /><path d="M2 7h14M0 13h12M4 10h14" stroke="#fbdc9a" strokeWidth={2} strokeLinecap="round" /></Svg>
        <span className="absolute -top-0.5 left-[11px] flex size-3 items-center justify-center rounded-full bg-[#c42b1c] text-[8px] text-white">1</span>
      </span>
      <span className="ml-[10px] w-[49px] pt-px text-[12.500px] tracking-[-0.200px]">31°C</span>
      <Svg w={12} sw={1.300}><path d="M1 8.500 6 3.500l5 5" /></Svg>
      <Svg w={14} c="ml-3" sw={1}><path d="M1 13.500A12.500 12.500 0 0 1 13 1.500M4 13.500A9.500 9.500 0 0 1 13 4.500M7 13.500A6.500 6.500 0 0 1 13 7.500M10 13.500A3.500 3.500 0 0 1 13 10.500" /><circle cx="12.500" cy="13" r="1" fill="currentColor" /></Svg>
      <Svg w={17} h={14} c="ml-[8px]" sw={1.100}><path d="M1 5h2.500L6.500 2v10L3.500 9H1ZM8.500 5q1.300 2 0 4M10.800 3.500q2.500 3.500 0 7M13.200 2q3.500 5 0 10" /></Svg>
      <Svg w={14} h={16} c="ml-[9px]" sw={1.200}><path d="M3 2.500Q6 0 9 2.500M3 14Q6 16.500 9 14M2 4.500h6.500v7H2ZM8.500 7 11.500 5.500v5L8.500 9" /></Svg>
      <Svg w={16} h={10} c="ml-[9px]" sw={1.200}><path d="M1 1h12v8H1ZM13 3.500h1.500v3H13" /><rect x="2.500" y="2.500" width="4.500" height="5" fill="#000" stroke="none" /></Svg>
      <span className="ml-[12px] w-[64px] text-[11.500px] tracking-[-0.300px] whitespace-nowrap">7:59 PM</span>
      <Svg w={16}><path d="M0 1h16v12h-5l-3 3V13H0Z" fill="#000" stroke="none" /><path d="M3 4.500h10M3 7h10M3 9.500h7" stroke="#fff" /></Svg>
      <span className="mr-[2px] ml-auto h-full w-px bg-[#aab0b7]" />
    </div>
  );
}

export default function App() {
  return (
    <div className="flex h-[768px] w-[1366px] flex-col overflow-hidden bg-[#1b1a25]">
      <TabStrip />
      <Toolbar />
      <div className="flex min-h-0 flex-1 flex-col font-['Inter',sans-serif] [font-feature-settings:'cv05','cv08']">
        <AppTop />
        <div className="mb-px flex min-h-0 flex-1 rounded-md border border-[#2c2b35] bg-[#13131b]">
          <Rail />
          <Nav />
          <Main />
          <aside className="flex w-[45px] shrink-0 flex-col items-center pt-4 text-[#66666e]">
            <Calendar s={12} />
            <span className="mt-6"><Building s={12} /></span>
          </aside>
        </div>
      </div>
      <Taskbar />
    </div>
  );
}
